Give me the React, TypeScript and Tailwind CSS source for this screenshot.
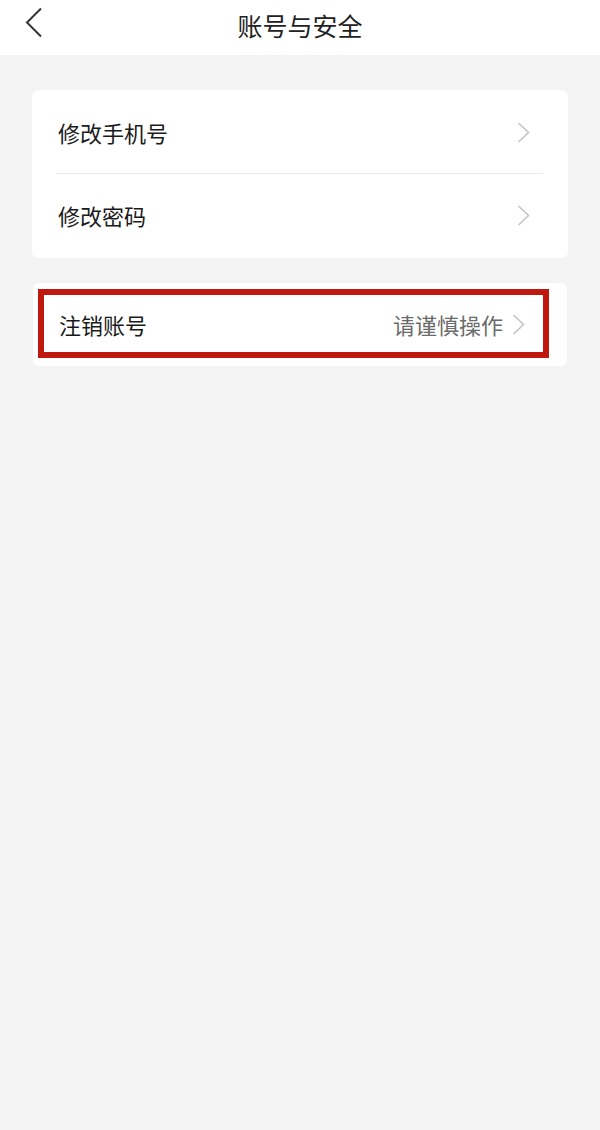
import React from 'react';

const font = { fontFamily: '"Noto Sans CJK SC", "Noto Sans", sans-serif' };

function Chevron() {
  return (
    <svg width="13" height="21" viewBox="0 0 13 21" className="shrink-0">
      <polyline points="1.5,1 11.5,10.5 1.5,20" fill="none" stroke="#c4c4c4" strokeWidth="1.6" />
    </svg>
  );
}

function Row({ label, hint, divider }: { label: string; hint?: string; divider?: boolean }) {
  return (
    <div className={`relative flex h-[83px] items-center pl-[26px] ${hint ? 'pr-[42px]' : 'pr-[38px]'}`}>
      <span className="flex-1 text-[22px] text-[#1a1a1a]">{label}</span>
      {hint && <span className="mr-[9px] text-[22px] text-[#6b6b6b]">{hint}</span>}
      <Chevron />
      {divider && <div className="absolute bottom-0 left-[24px] right-[25px] h-px bg-[#ebebeb]" />}
    </div>
  );
}

export default function App() {
  return (
    <div className="flex h-[1130px] w-[600px] flex-col bg-[#f3f3f3]" style={font}>
      {/* header */}
      <div className="relative flex h-[55px] items-center justify-center bg-white pb-[4px]">
        <svg width="18" height="31" viewBox="0 0 18 31" className="absolute left-[25px] top-[7px]">
          <polyline points="16,1.5 2,15.5 16,29.5" fill="none" stroke="#333" strokeWidth="2" />
        </svg>
        <span className="text-[25px] text-[#222]">账号与安全</span>
      </div>

      <div className="mx-[32px] mt-[35px] flex flex-col rounded-[6px] bg-white">
        <div className="h-px" />
        <Row label="修改手机号" divider />
        <Row label="修改密码" />
        <div className="h-px" />
      </div>

      <div className="relative mx-[33px] mt-[25px] rounded-[6px] bg-white">
        <Row label="注销账号" hint="请谨慎操作" />
        {/* highlight frame */}
        <div className="absolute left-[5px] top-[6px] h-[69px] w-[511px] border-[6px] border-[#c0180e]" />
      </div>
    </div>
  );
}
